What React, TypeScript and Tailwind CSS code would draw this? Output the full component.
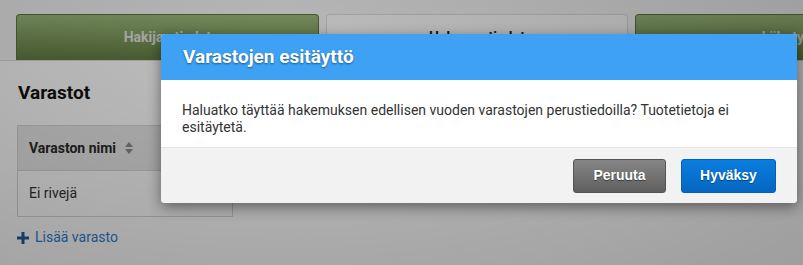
import React from "react";

const tabs = [
  { label: "Hakijan tiedot", active: true },
  { label: "Hakemustiedot", active: false },
  { label: "Lähetys", active: true },
];

const SortIcon: React.FC = () => (
  <svg width="8" height="12" viewBox="0 0 8 12" className="ml-[9px]">
    <path d="M4 0 L8 5 H0 Z" fill="#8a8a8a" />
    <path d="M4 12 L8 7 H0 Z" fill="#8a8a8a" />
  </svg>
);

const PlusIcon: React.FC = () => (
  <svg width="12" height="12" viewBox="0 0 12 12" className="mr-[6px]">
    <rect x="4.5" y="0" width="3" height="12" fill="#1f5c9a" />
    <rect x="0" y="4.5" width="12" height="3" fill="#1f5c9a" />
  </svg>
);

const App: React.FC = () => {
  return (
    <div className="relative w-[803px] h-[265px] overflow-hidden font-['Roboto',sans-serif]">
      {/* sivu taustalla */}
      <div className="flex flex-col h-full bg-white">
        <div className="flex gap-[7px] pl-4 pt-[14px] bg-[#f4f4f4] border-b border-[#dcdcdc] shrink-0">
          {tabs.map((t) => (
            <div
              key={t.label}
              className={
                t.active
                  ? "w-[303px] shrink-0 h-[46px] flex items-center justify-center rounded-t-[4px] border border-b-0 border-[#5c7540] bg-[linear-gradient(#9bb97a,#627c41)] text-[14px] font-bold text-[#e2e2e2]"
                  : "w-[302px] shrink-0 h-[46px] flex items-center justify-center rounded-t-[4px] border border-b-0 border-[#dcdcdc] bg-[#fbfbfb] text-[14px] font-bold text-[#222]"
              }
            >
              {t.label}
            </div>
          ))}
        </div>
        <div className="px-[17px] pt-[21px]">
          <h2 className="text-[19px] font-bold text-[#111] leading-[22px] pl-px">Varastot</h2>
          <div className="mt-[21px] w-[216px] border border-[#d6d6d6]">
            <div className="h-[45px] flex items-center px-[11px] bg-[#e9e9e9] border-b border-[#d6d6d6] text-[14px] font-bold text-[#2a2a2a]">
              Varaston nimi
              <SortIcon />
            </div>
            <div className="h-[45px] flex items-center px-[11px] text-[14px] text-[#333]">Ei rivejä</div>
          </div>
          <div className="mt-[10px] flex items-center text-[14px] text-[#2b80cf]">
            <PlusIcon />
            Lisää varasto
          </div>
        </div>
      </div>

      {/* taustan himmennys */}
      <div className="absolute inset-0 bg-[radial-gradient(ellipse_at_35%_15%,rgba(0,0,0,0.25),rgba(0,0,0,0.38))]" />

      {/* dialogi */}
      <div className="absolute left-[161px] top-[34px] w-[636px] rounded-[4px] overflow-hidden bg-white shadow-[0_4px_14px_rgba(0,0,0,0.45)]">
        <div className="h-[46px] flex items-center px-[22px] bg-[#3ea1f3]">
          <h3 className="text-[19px] font-bold text-white [text-shadow:0_1px_2px_rgba(0,0,0,0.45)]">
            Varastojen esitäyttö
          </h3>
        </div>
        <div className="pt-[22px] pb-[11px] px-[21px] text-[14px] leading-[17px] text-[#333]">
          Haluatko täyttää hakemuksen edellisen vuoden varastojen perustiedoilla? Tuotetietoja ei esitäytetä.
        </div>
        <div className="h-[56px] flex items-center justify-end gap-[15px] pr-[21px] bg-[#f2f2f2] border-t border-[#e6e6e6]">
          <button className="w-[93px] h-[34px] rounded-[3px] border border-[#555] bg-[linear-gradient(#868686,#5f5f5f)] text-[14px] font-bold text-white font-['Liberation_Sans',sans-serif] [text-shadow:0_1px_1px_rgba(0,0,0,0.5)]">
            Peruuta
          </button>
          <button className="w-[95px] h-[34px] rounded-[3px] border border-[#0560b3] bg-[linear-gradient(#0a7ddf,#0567c1)] text-[14px] font-bold text-white font-['Liberation_Sans',sans-serif] [text-shadow:0_1px_1px_rgba(0,0,0,0.4)]">
            Hyväksy
          </button>
        </div>
      </div>
    </div>
  );
};

export default App;
